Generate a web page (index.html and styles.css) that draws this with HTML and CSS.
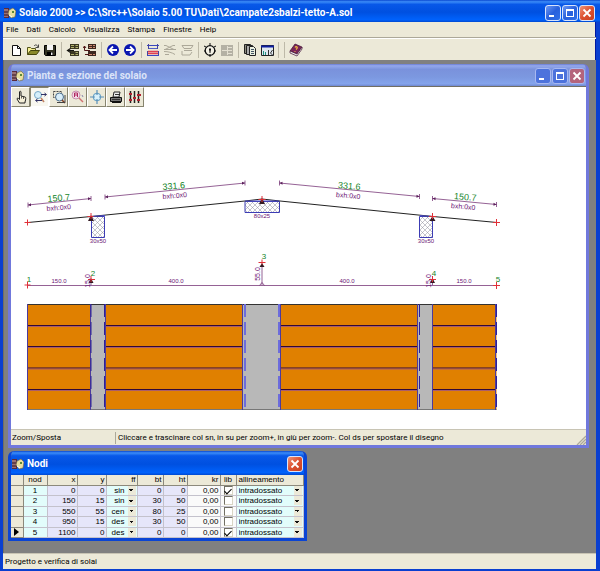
FILE: index.html
```html
<!DOCTYPE html>
<html lang="it">
<head>
<meta charset="utf-8">
<title>Solaio 2000</title>
<link rel="stylesheet" href="styles.css">
</head>
<body>
<svg width="0" height="0" class="defs" aria-hidden="true">
  <defs>
    <symbol id="app" viewBox="0 0 12 12">
      <path d="M0 1h5v10H0z" fill="#5a2a3c"/><path d="M1 2v8M3 2v8" stroke="#d8b8b0"/><path d="M0 5h5M0 8h5" stroke="#331020"/>
      <path d="M5 3l4-2 3 3-1 6-4 1-3-4z" fill="#e9e0a0" stroke="#6b6240" stroke-width=".6"/><path d="M8 4h2v2H8z" fill="#5c8a3a"/><path d="M5 8l3 2" stroke="#fff"/>
    </symbol>
    <symbol id="min" viewBox="0 0 16 16"><path d="M4 11h5" stroke="#fff" stroke-width="2"/></symbol>
    <symbol id="max" viewBox="0 0 16 16"><path d="M4.500 4v8M11.500 4v8M4 11.500h8" stroke="#fff"/><path d="M4 5h8" stroke="#fff" stroke-width="2"/></symbol>
    <symbol id="close" viewBox="0 0 16 16"><path d="M4.500 4.500l7 7M11.500 4.500l-7 7" stroke="#fff" stroke-width="1.800"/></symbol>
    <pattern id="hatch" width="5" height="5" patternUnits="userSpaceOnUse"><path d="M0 0l5 5M5 0L0 5" stroke="#8a8a98" stroke-width=".5"/></pattern>
  </defs>
</svg>
<div class="app">
  <header class="caption">
    <svg class="logo"><use href="#app"/></svg>
    <h1>Solaio 2000 &gt;&gt; C:\Src++\Solaio 5.00 TU\Dati\2campate2sbalzi-tetto-A.sol</h1>
    <button class="cap" aria-label="Riduci"><svg><use href="#min"/></svg></button>
    <button class="cap" aria-label="Ingrandisci"><svg><use href="#max"/></svg></button>
    <button class="cap red" aria-label="Chiudi"><svg><use href="#close"/></svg></button>
  </header>
  <nav class="menu">
    <button>File</button><button>Dati</button><button>Calcolo</button><button>Visualizza</button><button>Stampa</button><button>Finestre</button><button>Help</button>
  </nav>
  <div class="toolbar">
    <button aria-label="Nuovo"><svg viewBox="0 0 14 14"><path d="M3.500 2.500h5l3 3v7h-8z" fill="#fff" stroke="#111"/><path d="M8.500 2.500v3h3" fill="none" stroke="#111"/></svg></button>
    <button aria-label="Apri"><svg viewBox="0 0 14 14"><path d="M1.500 11.500v-7h3l1 1h4v2" fill="#f5ee90" stroke="#55551a"/><path d="M1.500 11.500l3-4h9l-3 4z" fill="#8a8a2a" stroke="#44440c"/><path d="M8 3c2-2 3-1 4 1M12.500 1.500v3h-3" fill="none" stroke="#222" stroke-width=".8"/></svg></button>
    <button aria-label="Salva"><svg viewBox="0 0 14 14"><path d="M1.500 2.500h11v10h-10l-1-1z" fill="#333322" stroke="#000"/><path d="M4 2h6v5H4z" fill="#f4f4f4"/><path d="M4 9h6v3H4z" fill="#000"/><path d="M8 9.500h1.500V12H8z" fill="#eee"/></svg></button>
    <i class="sep"></i>
    <button aria-label="Importa dati"><svg viewBox="0 0 14 14"><path d="M4 1h9v5H4zM4 8h9v5H4z" fill="#3c3822"/><path d="M5 2.500h3M9.500 2.500H12M5 4.500h3M9.500 4.500H12M9.500 9.500H12M9.500 11.500H12M5 11.500h3" stroke="#b0b06c"/><path d="M8 7.500H2M4.500 5.500l-3 2 3 2" fill="none" stroke="#151510" stroke-width="1.200"/></svg></button>
    <button aria-label="Esporta dati"><svg viewBox="0 0 14 14"><path d="M5 1h8v5H5zM5 8h8v5H5z" fill="#3c2820"/><path d="M6 2.500h3M10 2.500h2M6 4.500h3M10 4.500h2M6 11.500h3M10 11.500h2" stroke="#d08870"/><path d="M7 7.500H1.500V3M0 5l1.500-2L3 5M2 11.500h4" fill="none" stroke="#501818"/></svg></button>
    <i class="sep"></i>
    <button aria-label="Indietro"><svg viewBox="0 0 14 14"><circle cx="7" cy="7" r="6" fill="#0a16b0"/><path d="M11 7H4M7 3.500L3.500 7 7 10.500" fill="none" stroke="#fff" stroke-width="1.800"/></svg></button>
    <button aria-label="Avanti"><svg viewBox="0 0 14 14"><circle cx="7" cy="7" r="6" fill="#0a16b0"/><path d="M3 7h7M7 3.500L10.500 7 7 10.500" fill="none" stroke="#fff" stroke-width="1.800"/></svg></button>
    <i class="sep"></i>
    <button aria-label="Pianta"><svg viewBox="0 0 14 14"><path d="M1 2.500h12M1 12.500h12" stroke="#3a48c0"/><path d="M2.500 1v5M11.500 1v5M1.500 8v4M12.500 8v4" stroke="#4444a0"/><path d="M3 5.500h8" stroke="#5060c8"/><path d="M2 8.500h10M2 10.500h10" stroke="#e04050" stroke-width="1.500"/></svg></button>
    <button aria-label="Momenti" disabled><svg viewBox="0 0 14 14"><path d="M1 2.500h2l8 4M12 2.500h-2l-8 4M1 6.500h12M1 8.500c4 0 8 1 11 3M2 11.500h4" fill="none" stroke="#aca899"/></svg></button>
    <button aria-label="Tagli" disabled><svg viewBox="0 0 14 14"><path d="M2 2.500h11l-2 3H4zM4 7.500h8M2 8v4h8l2-3" fill="none" stroke="#aca899"/></svg></button>
    <i class="sep"></i>
    <button aria-label="Calcola"><svg viewBox="0 0 14 14"><circle cx="7" cy="7.500" r="4.800" fill="#f4f2e6" stroke="#111" stroke-width="1.300"/><path d="M7 0v3M7 5v5M1 3l2 1M13 3l-2 1M1 8h2M11 8h2M7 11v3" stroke="#111"/><path d="M6 6l1 3 1-3z"/></svg></button>
    <button aria-label="Tabella" disabled><svg viewBox="0 0 14 14"><path d="M1 2h12v11H1z" fill="#b4b1a4"/><path d="M2 7.500h10M7.500 3v9M8 4.500h4M8 10.500h4" stroke="#e4e0d2"/></svg></button>
    <i class="sep"></i>
    <button aria-label="Relazione"><svg viewBox="0 0 14 14"><path d="M1.500 1.500h6v9h-6z" fill="#8c8a7c" stroke="#222"/><path d="M3.500 2.500h6v9h-6z" fill="#aaa" stroke="#222"/><path d="M6.500 3.500h4l2 2v7h-6z" fill="#e9efe0" stroke="#222"/><path d="M8 6.500h3M8 8.500h3M8 10.500h3" stroke="#456"/></svg></button>
    <button aria-label="Finestra dati"><svg viewBox="0 0 14 14"><path d="M1.500 2.500h12v10h-12z" fill="#dfe8f0" stroke="#222"/><path d="M1 3.500h13" stroke="#1020a0" stroke-width="2"/><path d="M3.500 12V8M5.500 12V9" stroke="#209080"/><path d="M8.500 12V7M10.500 10l2-3M10.500 10l2 2" stroke="#333"/></svg></button>
    <i class="sep"></i><i class="sep"></i>
    <button aria-label="Guida"><svg viewBox="0 0 14 14"><path d="M6 1l7 3-5 7-7-3z" fill="#7a2458" stroke="#401030" stroke-width=".7"/><path d="M1 8v2l7 3 5-7V4l-5 7z" fill="#eee" stroke="#401030" stroke-width=".7"/><path d="M6 4.500c1-1.500 3-.5 2 .8L7 6.500M6 8v.8" fill="none" stroke="#f6c040" stroke-width="1.200"/></svg></button>
  </div>
  <main class="desktop">
    <section class="win plan">
      <header class="caption">
        <svg class="logo"><use href="#app"/></svg>
        <h2>Pianta e sezione del solaio</h2>
        <button class="cap" aria-label="Riduci"><svg><use href="#min"/></svg></button>
        <button class="cap" aria-label="Ingrandisci"><svg><use href="#max"/></svg></button>
        <button class="cap red" aria-label="Chiudi"><svg><use href="#close"/></svg></button>
      </header>
      <div class="sheet">
        <div class="tools">
          <button aria-label="Mano"><svg viewBox="0 0 14 14"><path d="M5.500 8V2c0-1 1.500-1 1.500 0v4l4 1c1 0 1 2 0 5v1H5.500L3 9c0-1 1-1.500 2.500.500z" fill="#f6f0d8" stroke="#222"/><path d="M7.500 6.500v2M9.500 7v2" stroke="#222" stroke-width=".7"/></svg></button>
          <button aria-label="Zoom e sposta" class="on"><svg viewBox="0 0 14 14"><circle cx="5" cy="5" r="3.500" fill="#d6effa" stroke="#78a8c8"/><path d="M8 8l3 4" stroke="#c08060" stroke-width="1.500"/><path d="M8 4.500h5M11.500 3l2 1.500-2 1.500M3 10.500h6M4.500 9l-2 1.500 2 1.500" fill="none" stroke="#336"/></svg></button>
          <button aria-label="Zoom finestra"><svg viewBox="0 0 14 14"><path d="M1.500 1.500h8v6h-8z" fill="none" stroke="#444" stroke-dasharray="2 1"/><circle cx="7.500" cy="7" r="4" fill="#d9eefa" stroke="#4a6c8c"/><path d="M10 10l3 3" stroke="#803c20" stroke-width="1.500"/><path d="M5 12.500h8V5" fill="none" stroke="#444"/></svg></button>
          <button aria-label="Zoom precedente"><svg viewBox="0 0 14 14"><circle cx="5" cy="5" r="4" fill="#f4dce8" stroke="#c890b0"/><path d="M3.500 7V3h3v4M3.500 5h3" fill="none" stroke="#b02860"/><path d="M8 8l4 4" stroke="#d07070" stroke-width="1.500"/><path d="M11 5l1 2" stroke="#88a"/></svg></button>
          <button aria-label="Zoom tutto"><svg viewBox="0 0 14 14"><circle cx="7" cy="7" r="3.800" fill="#d8f0fa" stroke="#5a98c0"/><path d="M7 0v5M7 9v5M0 7h5M9 7h5" stroke="#5a90b8" stroke-width="1.200"/></svg></button>
          <button aria-label="Stampa"><svg viewBox="0 0 14 14"><path d="M4 7l1-5h6l-1 5z" fill="#eee" stroke="#222"/><path d="M1.500 7.500h11v4h-11z" fill="#777" stroke="#111"/><path d="M3 12.500h9" stroke="#111"/><path d="M3 9.500h8M6 4.500h4" stroke="#333"/></svg></button>
          <button aria-label="Armature"><svg viewBox="0 0 14 14"><path d="M2.500 1v12M6.500 1v12M10.500 1v12" stroke="#222" stroke-width="1.500"/><path d="M1 4h3M5 8h3M9 5h4M1 10h3M9 10h3" stroke="#b02030" stroke-width="1.800"/></svg></button>
        </div>
        <svg class="drawing" width="575" height="322" viewBox="11 107 575 322" role="img" aria-label="Sezione e pianta del solaio">
          <g stroke="#3c3cb4" fill="url(#hatch)">
            <path d="M91.500 216.500h13v21h-13zM245 201.500h34.500v11H245zM419.500 216.500h13v21h-13z"/>
          </g>
          <path d="M28 222.500L91 216.500 245 201l17-2 18 2 153 15.500 64 6" fill="none" stroke="#222"/>
          <path d="M91 216.500l14-1M245 201h34M420 215.500l12 1" stroke="#4a4ac0" fill="none"/>
          <g stroke="#7a3a7a" stroke-width=".8" fill="none">
            <path d="M28 205L91 198.500M105 197L245 183M279.500 183L419.500 196.500M432.500 198.500L496.500 204.500"/>
            <path d="M28 202.500v5M91 196v5M105 194.500v5M245 180.500v5M279.500 180.500v5M419.500 194v5M432.500 196v5M496.500 202v5"/>
            <path d="M28 285.500h469"/>
            <path d="M262 264v21M91 279v6M432.500 279v6M259.500 285.500l2.500-3 2.500 3"/>
          </g>
          <g fill="#5c205c"><path d="M28 205l3-1.800v3zM91 198.500l-3-1.200v3zM105 197l3-1.800v3zM245 183l-3-1.200v3zM279.500 183l3-1.200v3zM419.500 196.500l-3-1.800v3zM432.500 198.500l3-1.200v3zM496.500 204.500l-3-1.800v3z"/></g>
          <g fill="#331a22"><path d="M91 215l3 6h-6zM262 198l3 6h-6zM432.500 216l3 5h-6zM262 263l2.500 4h-5zM91 278l2.500 5h-5zM432.500 278l2.500 5h-5z"/></g>
          <g stroke="#e03038" fill="none"><path d="M24.500 222.500h6M27.500 219.500v6M87.500 216.500h6M91 213v6M258.500 199.500h7M262 196v6M429 216.500h7M432.500 213v6M493 222.500h7M496.500 219v7M24.500 285h6M27.500 281.500v7M88 279.500h7M91 276v6M258.500 262.500h7M262 259.500v5M429 279.500h7M432.500 276v6M493 285.500h7M496.500 282v7"/></g>
          <g class="len">
            <text transform="translate(59 201) rotate(-5)">150.7</text>
            <text transform="translate(174 189) rotate(-5)">331.6</text>
            <text transform="translate(349 189) rotate(5)">331.6</text>
            <text transform="translate(465 200) rotate(5)">150.7</text>
          </g>
          <g class="size">
            <text transform="translate(59 210) rotate(-5)">bxh:0x0</text>
            <text transform="translate(175 198) rotate(-5)">bxh:0x0</text>
            <text transform="translate(348 198) rotate(5)">bxh:0x0</text>
            <text transform="translate(463 209) rotate(5)">bxh:0x0</text>
          </g>
          <g class="section">
            <text x="98" y="243">30x50</text><text x="262" y="218">80x25</text><text x="426" y="243">30x50</text>
            <text x="59" y="283">150.0</text><text x="176" y="283">400.0</text><text x="347" y="283">400.0</text><text x="464" y="283">150.0</text>
          </g>
          <g class="size">
            <text transform="translate(90 281) rotate(-90)">15.0</text>
            <text transform="translate(260 274) rotate(-90)">55.0</text>
            <text transform="translate(431 281) rotate(-90)">15.0</text>
          </g>
          <g class="node"><text x="29" y="282">1</text><text x="93" y="276">2</text><text x="264" y="259">3</text><text x="434" y="276">4</text><text x="498" y="282">5</text></g>
          <path d="M28 304.500h468.500V410H28z" fill="#e08000"/>
          <path d="M28 325.500h468M28 346.500h468M28 368h468M28 389.500h468" stroke="#300838" stroke-width="1.200"/>
          <path d="M28 326.500h468M28 347.500h468M28 369h468M28 390.500h468" stroke="#9c5484" stroke-width=".8"/>
          <path d="M90.500 304.500H106V410H90.500zM243 304.500h37.500V410H243zM417.500 304.500h15V410h-15z" fill="#b8b8b8"/>
          <path d="M28 304.500h468.500" stroke="#333"/><path d="M28 409.500h468.500" stroke="#777"/>
          <path d="M27.500 304v106M90.500 304v106M105.500 304v106M242.500 304v106M280.500 304v106M417.500 304v106M432.500 304v106M495.500 304v106" stroke="#4c3a9c"/>
          <g stroke-dasharray="13 5"><path d="M91 304v106M104.500 304v106M496.500 304v106M419.500 304v106" stroke="#2c2098"/><path d="M245 304v106M279 304v106" stroke="#6c6cdc" stroke-width="2"/></g>
        </svg>
      </div>
      <footer class="status"><span class="mode">Zoom/Sposta</span><span class="hint">Cliccare e trascinare col sn, in su per zoom+, in giù per zoom-. Col ds per spostare il disegno</span>
        <svg class="grip" viewBox="0 0 10 10"><path d="M1 10l9-9M4 10l6-6M7 10l3-3" stroke="#aca899" stroke-width="1.300"/></svg></footer>
    </section>
    <section class="win nodes">
      <header class="caption">
        <svg class="logo"><use href="#app"/></svg>
        <h2>Nodi</h2>
        <button class="cap red" aria-label="Chiudi"><svg><use href="#close"/></svg></button>
      </header>
      <table>
        <colgroup><col class="c-mark"><col class="c-nod"><col class="c-num"><col class="c-y"><col class="c-ff"><col class="c-bt"><col class="c-ht"><col class="c-kr"><col class="c-lib"><col></colgroup>
        <thead><tr><th></th><th class="mid">nod</th><th>x</th><th>y</th><th>ff</th><th>bt</th><th>ht</th><th>kr</th><th class="mid">lib</th><th class="left">allineamento</th></tr></thead>
        <tbody>
          <tr><th></th><td class="nod">1</td><td>0</td><td>0</td><td class="pick"><select aria-label="ff 1"><option>sin</option></select></td><td>0</td><td>0</td><td class="kr">0,00</td><td class="lib"><input type="checkbox" aria-label="lib 1" checked></td><td class="pick wide"><select aria-label="allineamento 1"><option>intradossato</option></select></td></tr>
          <tr><th></th><td class="nod">2</td><td>150</td><td>15</td><td class="pick"><select aria-label="ff 2"><option>sin</option></select></td><td>30</td><td>50</td><td class="kr">0,00</td><td class="lib"><input type="checkbox" aria-label="lib 2"></td><td class="pick wide"><select aria-label="allineamento 2"><option>intradossato</option></select></td></tr>
          <tr><th></th><td class="nod">3</td><td>550</td><td>55</td><td class="pick"><select aria-label="ff 3"><option>cen</option></select></td><td>80</td><td>25</td><td class="kr">0,00</td><td class="lib"><input type="checkbox" aria-label="lib 3"></td><td class="pick wide"><select aria-label="allineamento 3"><option>intradossato</option></select></td></tr>
          <tr><th></th><td class="nod">4</td><td>950</td><td>15</td><td class="pick"><select aria-label="ff 4"><option>des</option></select></td><td>30</td><td>50</td><td class="kr">0,00</td><td class="lib"><input type="checkbox" aria-label="lib 4"></td><td class="pick wide"><select aria-label="allineamento 4"><option>intradossato</option></select></td></tr>
          <tr><th><svg class="current" viewBox="0 0 5 8"><path d="M0 0l5 4-5 4z"/></svg></th><td class="nod">5</td><td>1100</td><td>0</td><td class="pick"><select aria-label="ff 5"><option>des</option></select></td><td>0</td><td>0</td><td class="kr">0,00</td><td class="lib"><input type="checkbox" aria-label="lib 5" checked></td><td class="pick wide"><select aria-label="allineamento 5"><option>intradossato</option></select></td></tr>
        </tbody>
      </table>
    </section>
  </main>
  <footer class="status main-status">Progetto e verifica di solai</footer>
</div>
</body>
</html>
```
FILE: styles.css
```css
* { box-sizing: border-box; }
html, body { height: 100%; margin: 0; }
body { font: 8px/12px Roboto, "Liberation Sans", sans-serif; color: #000; background: #0a4fd8; }
button, select, input { font: inherit; color: inherit; margin: 0; padding: 0; border: 0; background: none; }
.defs { display: block; position: absolute; }

.app { min-height: 100%; display: flex; flex-direction: column; border: solid #0a3fd0; border-width: 0 4px 4px 3px; background: #ece9d8; box-shadow: inset -1px -1px #0018a0; }

.caption { display: flex; align-items: center; gap: 1px; height: 22px; color: #fff; background: linear-gradient(#0a48d0, #3b8cf8 8%, #0858e8 20%, #0050e0 55%, #0062fc 90%, #0048d0); }
.app > .caption { margin: 0 -4px 0 -3px; padding: 3px 5px 0 4px; }
.logo { width: 12px; height: 12px; flex: none; }
.caption h1, .caption h2 { flex: 1; margin: 0 0 0 2px; font: bold 10px/14px Roboto, "Open Sans", sans-serif; white-space: nowrap; }
.cap { width: 16px; height: 16px; flex: none; border: 1px solid #d8e4fc; border-radius: 3px; background: linear-gradient(135deg, #6c98f4, #2860dc 50%, #3070e8); }
.cap svg { display: block; width: 16px; height: 16px; margin: -1px; }
.cap.red { background: linear-gradient(135deg, #f09478, #dc5030 50%, #c84020); }

.menu { display: flex; gap: 8px; height: 16px; padding: 0 3px; border-bottom: 1px solid #aca899; }
.toolbar { display: flex; align-items: center; gap: 3px; height: 22px; padding: 0 6px; border-top: 1px solid #fff; }
.toolbar button, .toolbar svg { display: block; width: 14px; height: 14px; }
.sep { width: 1px; height: 16px; margin: 0 1px; background: #bdb9a8; flex: none; }

.desktop { flex: 1; padding: 4px 7px 12px 4px; background: #808080; border-left: 1px solid #716f64; display: flex; flex-direction: column; align-items: flex-start; gap: 3px; }
.win { border: 3px solid #0a44d4; border-top: 0; border-radius: 6px 6px 0 0; overflow: hidden; }
.win .caption { margin: 0 -3px; padding: 1px 4px 0 4px; }
.plan { align-self: stretch; border-color: #7078dc; }
.plan .caption { background: linear-gradient(#6a7cd4, #94a8ec 8%, #7a92dc 25%, #7c98e0 60%, #84a4ec 90%, #7088d0); color: #dce4f8; }
.plan .cap { border-color: #a8b8f0; background: #4c72dc; }
.plan .cap.red { background: #b4647c; }
.sheet { background: #fff; border-top: 1px solid #716f64; overflow: hidden; }
.tools { display: flex; height: 20px; }
.tools button { width: 19px; height: 20px; padding: 2px; background: #ece9d8; border: 1px solid; border-color: #fff #87846f #87846f #fff; }
.tools .on { background: #f8f7f0; border-color: #87846f #fff #fff #87846f; }
.tools svg { display: block; width: 14px; height: 14px; }
.drawing { display: block; }
.drawing text { font-family: "Liberation Sans", sans-serif; text-anchor: middle; fill: #6c1474; }
.drawing .len text { font-size: 9px; fill: #148428; }
.drawing .size text { font-size: 7px; }
.drawing .section text { font-size: 6px; }
.drawing .node text { font-size: 8px; fill: #148428; }

.status { display: flex; align-items: center; height: 16px; background: #ece9d8; border-top: 1px solid #c8c4b4; white-space: nowrap; }
.mode { width: 105px; padding-left: 1px; border-right: 1px solid #aca899; }
.hint { flex: 1; padding-left: 2px; }
.grip { width: 10px; height: 10px; align-self: flex-end; }
.main-status { padding: 2px 0 0 2px; }

.nodes { width: 299px; }
.nodes .caption { height: 24px; }
table { width: 100%; table-layout: fixed; border-collapse: collapse; background: #e6e6fa; font: 8px/9px "Liberation Sans", sans-serif; }
.c-mark { width: 12px; } .c-nod { width: 24px; } .c-num { width: 30px; } .c-y { width: 29px; } .c-ff { width: 31px; } .c-bt { width: 26px; } .c-ht { width: 24px; } .c-kr { width: 33px; } .c-lib { width: 16px; }
th, td { height: 10px; padding: 0 1px; text-align: right; font-weight: normal; border: solid #c4c2cc; border-width: 0 1px 1px 0; white-space: nowrap; overflow: hidden; }
tbody tr:nth-child(even) td { height: 11px; }
th { background: #ece9d8; border-color: #8c897c; }
.mid, .nod { text-align: center; }
.left { text-align: left; padding-left: 2px; }
.nod, .pick { background: #e2fdfb; }
.kr, .lib { background: #fafafa; }
.lib { text-align: center; }
.lib input { appearance: none; display: block; width: 9px; height: 9px; margin: 0 auto; background: #fff; border: 1px solid; border-color: #716f64 #d8d4c4 #d8d4c4 #716f64; }
.lib input:checked::before { content: ""; display: block; width: 3px; height: 6px; margin: 0 auto; border: solid #000; border-width: 0 1px 1px 0; transform: rotate(45deg); }
.pick select { appearance: none; display: block; width: 100%; height: 9px; padding: 0 11px 0 0; line-height: 9px; text-align: right; background: conic-gradient(from -45deg at 50% 100%, #111 90deg, transparent 0) right 3px center / 4px 2px no-repeat, linear-gradient(#ece9d8, #ece9d8) right / 8px 100% no-repeat; }
.pick.wide select { padding-left: 1px; text-align: left; }
.current { display: block; width: 5px; height: 8px; margin: 0 auto; }
```
